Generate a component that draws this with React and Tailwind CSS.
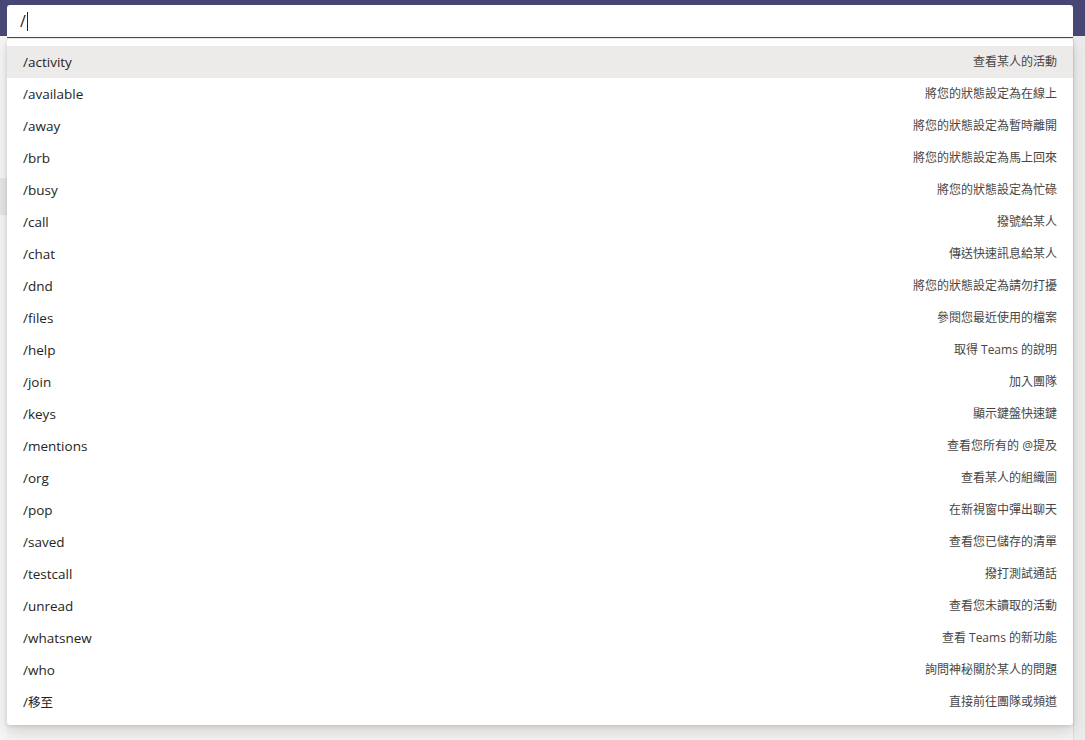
const commands = [
  ["/activity", "查看某人的活動"],
  ["/available", "將您的狀態設定為在線上"],
  ["/away", "將您的狀態設定為暫時離開"],
  ["/brb", "將您的狀態設定為馬上回來"],
  ["/busy", "將您的狀態設定為忙碌"],
  ["/call", "撥號給某人"],
  ["/chat", "傳送快速訊息給某人"],
  ["/dnd", "將您的狀態設定為請勿打擾"],
  ["/files", "參閱您最近使用的檔案"],
  ["/help", "取得 Teams 的說明"],
  ["/join", "加入團隊"],
  ["/keys", "顯示鍵盤快速鍵"],
  ["/mentions", "查看您所有的 @提及"],
  ["/org", "查看某人的組織圖"],
  ["/pop", "在新視窗中彈出聊天"],
  ["/saved", "查看您已儲存的清單"],
  ["/testcall", "撥打測試通話"],
  ["/unread", "查看您未讀取的活動"],
  ["/whatsnew", "查看 Teams 的新功能"],
  ["/who", "詢問神秘關於某人的問題"],
  ["/移至", "直接前往團隊或頻道"],
];

const font = { fontFamily: '"Open Sans", "Noto Sans CJK TC", sans-serif' };

const App = () => {
  return (
    <div
      className="relative w-[1085px] h-[740px] overflow-hidden bg-[#f3f2f1]"
      style={font}
    >
      {/* page behind the overlay */}
      <div className="h-9 bg-[#464775]" />
      <div className="flex h-[704px]">
        <div className="w-[7px] bg-[#f5f5f5] flex flex-col">
          <div className="h-[142px]" />
          <div className="h-[37px] bg-[#e8e6e4]" />
        </div>
        <div className="flex-1 bg-[#f3f2f1]" />
        <div className="w-3 bg-[#ebebeb] border-l border-[#dcdcdc]" />
      </div>

      {/* command box */}
      <div className="absolute left-[7px] top-[5px] w-[1066px]">
        <div className="h-[33px] bg-white rounded-t-[3px] border-b border-[#464775] flex items-center px-[13px]">
          <span className="text-[16px] text-[#252423] leading-none">/</span>
          <span className="w-px h-[19px] bg-[#252423] ml-px" />
        </div>
        <div className="mt-[1px] bg-white rounded-[3px] py-[7px] shadow-[0_6px_14px_rgba(0,0,0,0.13),0_1px_4px_rgba(0,0,0,0.11)]">
          {commands.map(([cmd, desc], i) => (
            <div
              key={cmd}
              className={`h-8 flex items-center justify-between pl-4 pr-4 ${
                i === 0 ? "bg-[#edebe9]" : ""
              }`}
            >
              <span className="text-[13.5px] text-[#252423]">
                {cmd.startsWith("/移") ? (
                  <>
                    /<span className="text-[12.5px]">移至</span>
                  </>
                ) : (
                  cmd
                )}
              </span>
              <span className="text-[12px] text-[#484644]">{desc}</span>
            </div>
          ))}
        </div>
      </div>
    </div>
  );
};

export default App;
